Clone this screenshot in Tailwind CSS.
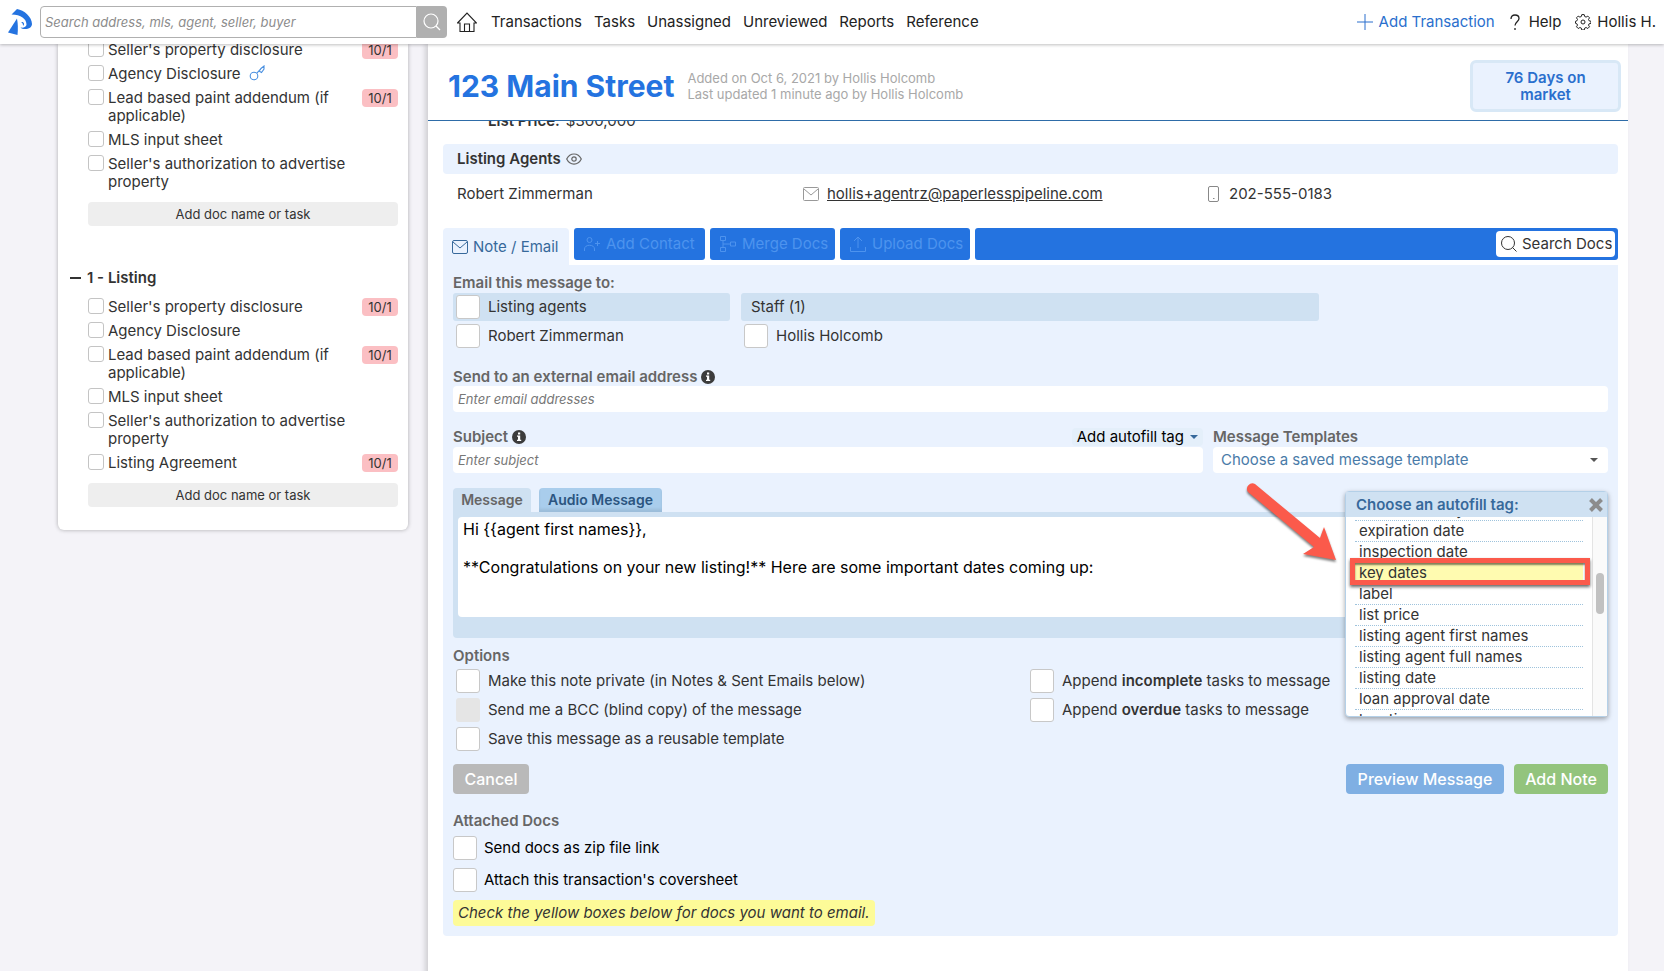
<!DOCTYPE html>
<html lang="en">
<head>
    <meta charset="utf-8">
    <meta name="viewport" content="width=device-width, initial-scale=1">
    <title>123 Main Street</title>
    <script src="https://cdn.jsdelivr.net/npm/@tailwindcss/browser@4"></script>
</head>
<body class="bg-[#f4f3f8] font-['Inter',sans-serif] text-sm text-[#333] h-screen overflow-hidden">

    <!-- Top bar -->
    <header class="relative z-20 flex h-11 items-center bg-white pl-2 pr-2 text-[15px] text-[#222] shadow-[0_1px_3px_rgba(0,0,0,0.25)]">
        <a href="#" aria-label="Home page" class="mr-2 shrink-0">
            <svg class="h-7 w-6" viewBox="0 0 24 28" fill="#2473e0"><path d="M3.500 6.500 9 1C16 2 24 9 24 16c0 3-3 5-7 5-2 0-3.500-.5-4.500-1.500 3 .5 6-.5 6-3C18.500 11 13 6.500 3.500 6.500Z"/><path d="M9 10.500 0 24.500l9.500 2.500c.6-6 .5-11-.5-16.500Z"/><path d="M13 14c3-.5 4 2 2 4 .3-1.500-.5-3-2-4Z"/></svg>
        </a>
        <form class="flex h-8 w-[407px] shrink-0">
            <input type="text" aria-label="Search" placeholder="Search address, mls, agent, seller, buyer" class="min-w-0 flex-1 rounded-l-sm border border-[#b0b0b0] bg-white px-1 text-[13px] italic placeholder:text-[#8c8c8c]">
            <button type="button" aria-label="Search" class="flex w-[30px] items-center justify-center rounded-r-sm bg-[#b0b0b0]">
                <svg class="h-[18px] w-[18px]" viewBox="0 0 18 18" fill="none" stroke="#fff" stroke-width="1.2"><circle cx="8" cy="8" r="7"/><path d="m13 13 4 4"/></svg>
            </button>
        </form>
        <nav class="ml-[10px] flex items-center gap-3">
            <a href="#" aria-label="Home" class="mr-[2px]">
                <svg class="h-5 w-5" viewBox="0 0 20 20" fill="none" stroke="#222" stroke-width="1.1"><path d="M.5 11 10 1l9.500 10H17v8.500H3V11Z"/><path d="M7.500 19.500V12h5v7.500"/></svg>
            </a>
            <a href="#">Transactions</a>
            <a href="#">Tasks</a>
            <a href="#">Unassigned</a>
            <a href="#">Unreviewed</a>
            <a href="#">Reports</a>
            <a href="#">Reference</a>
        </nav>
        <div class="ml-auto flex items-center gap-[14px]">
            <a href="#" class="flex items-center gap-[6px] text-[#2a6fcd]">
                <svg class="h-4 w-4" viewBox="0 0 16 16" stroke="#2a6fcd" fill="none"><path d="M8 0v16M0 8h16"/></svg>
                Add Transaction
            </a>
            <a href="#" class="flex items-center gap-2">
                <svg class="h-4 w-3" viewBox="0 0 12 16" fill="none" stroke="#222" stroke-width="1.300"><path d="M2 5C2 2.500 3.500 1 6 1s4 1.500 4 3.500C10 7.500 6 8 6 11.500"/><path d="M6 14v2"/></svg>
                Help
            </a>
            <a href="#" class="flex items-center gap-[6px]">
                <svg class="h-4 w-4" viewBox="0 0 16 16" fill="none" stroke="#222" stroke-linejoin="round"><path d="M6.800.600h2.400l.5 1.900 1.400.600 1.700-1 1.700 1.700-1 1.700.600 1.300 1.900.500v2l-1.900.500-.6 1.300 1 1.700-1.700 1.700-1.700-1-1.400.600-.5 1.900H6.800l-.5-1.900-1.400-.6-1.700 1-1.700-1.700 1-1.700-.600-1.300L.500 9.300v-2l1.400-.5.6-1.300-1-1.700 1.700-1.700 1.700 1 1.400-.6Z"/><circle cx="8" cy="8" r="2"/></svg>
                Hollis H.
            </a>
        </div>
    </header>

    <div class="flex h-full items-start">

        <!-- Checklist -->
        <aside class="ml-[58px] w-[350px] shrink-0 overflow-hidden rounded-b-md bg-white pb-[23px] pl-3 pr-[10px] text-[15px] leading-[18px] shadow-[0_0_4px_rgba(0,0,0,0.3)]">
            <ul class="-mt-[3px] flex flex-col gap-[6px] pl-[18px]">
                <li class="flex items-start gap-1">
                    <input type="checkbox" id="a1" class="h-4 w-4 shrink-0 appearance-none rounded-[3px] border border-[#c4c4c4] bg-white">
                    <label for="a1" class="flex-1">Seller's property disclosure</label>
                    <span class="w-9 rounded-sm bg-[#fbbfc3] text-center text-[13px]">10/1</span>
                </li>
                <li class="flex items-start gap-1">
                    <input type="checkbox" id="a2" class="h-4 w-4 shrink-0 appearance-none rounded-[3px] border border-[#c4c4c4] bg-white">
                    <label for="a2">Agency Disclosure</label>
                    <svg class="ml-1 h-4 w-4" viewBox="0 0 16 16" fill="none" stroke="#4a90e0" stroke-width="1.100"><circle cx="5" cy="11" r="3.800"/><path d="m7.800 8.200 4-4.200M10 6l2.500 1.500L15 4V1l-3 2.500Z"/></svg>
                </li>
                <li class="flex items-start gap-1">
                    <input type="checkbox" id="a3" class="h-4 w-4 shrink-0 appearance-none rounded-[3px] border border-[#c4c4c4] bg-white">
                    <label for="a3" class="flex-1 pr-5">Lead based paint addendum (if applicable)</label>
                    <span class="w-9 rounded-sm bg-[#fbbfc3] text-center text-[13px]">10/1</span>
                </li>
                <li class="flex items-start gap-1">
                    <input type="checkbox" id="a4" class="h-4 w-4 shrink-0 appearance-none rounded-[3px] border border-[#c4c4c4] bg-white">
                    <label for="a4">MLS input sheet</label>
                </li>
                <li class="flex items-start gap-1">
                    <input type="checkbox" id="a5" class="h-4 w-4 shrink-0 appearance-none rounded-[3px] border border-[#c4c4c4] bg-white">
                    <label for="a5" class="flex-1 pr-10">Seller's authorization to advertise property</label>
                </li>
            </ul>
            <div class="pl-[18px] pt-[11px]">
                <button type="button" class="h-6 w-full rounded-sm bg-[#eee] text-[13px]">Add doc name or task</button>
            </div>

            <h2 class="mt-[43px] flex items-center gap-[6px] text-[15px] font-semibold leading-[18px]"><span class="h-[2px] w-[11px] bg-[#333]"></span>1 - Listing</h2>
            <ul class="mt-[11px] flex flex-col gap-[6px] pl-[18px]">
                <li class="flex items-start gap-1">
                    <input type="checkbox" id="b1" class="h-4 w-4 shrink-0 appearance-none rounded-[3px] border border-[#c4c4c4] bg-white">
                    <label for="b1" class="flex-1">Seller's property disclosure</label>
                    <span class="w-9 rounded-sm bg-[#fbbfc3] text-center text-[13px]">10/1</span>
                </li>
                <li class="flex items-start gap-1">
                    <input type="checkbox" id="b2" class="h-4 w-4 shrink-0 appearance-none rounded-[3px] border border-[#c4c4c4] bg-white">
                    <label for="b2">Agency Disclosure</label>
                </li>
                <li class="flex items-start gap-1">
                    <input type="checkbox" id="b3" class="h-4 w-4 shrink-0 appearance-none rounded-[3px] border border-[#c4c4c4] bg-white">
                    <label for="b3" class="flex-1 pr-5">Lead based paint addendum (if applicable)</label>
                    <span class="w-9 rounded-sm bg-[#fbbfc3] text-center text-[13px]">10/1</span>
                </li>
                <li class="flex items-start gap-1">
                    <input type="checkbox" id="b4" class="h-4 w-4 shrink-0 appearance-none rounded-[3px] border border-[#c4c4c4] bg-white">
                    <label for="b4">MLS input sheet</label>
                </li>
                <li class="flex items-start gap-1">
                    <input type="checkbox" id="b5" class="h-4 w-4 shrink-0 appearance-none rounded-[3px] border border-[#c4c4c4] bg-white">
                    <label for="b5" class="flex-1 pr-10">Seller's authorization to advertise property</label>
                </li>
                <li class="flex items-start gap-1">
                    <input type="checkbox" id="b6" class="h-4 w-4 shrink-0 appearance-none rounded-[3px] border border-[#c4c4c4] bg-white">
                    <label for="b6" class="flex-1">Listing Agreement</label>
                    <span class="w-9 rounded-sm bg-[#fbbfc3] text-center text-[13px]">10/1</span>
                </li>
            </ul>
            <div class="pl-[18px] pt-[11px]">
                <button type="button" class="h-6 w-full rounded-sm bg-[#eee] text-[13px]">Add doc name or task</button>
            </div>
        </aside>

        <!-- Transaction -->
        <main class="ml-5 mr-9 min-h-full min-w-0 flex-1 bg-white shadow-[-3px_0_5px_rgba(0,0,0,0.15)]">
            <div class="relative z-10 flex h-[77px] items-center border-b border-[#2e6ca8] bg-white pl-5 pr-[7px] pt-2">
                <h1 class="text-[30px] font-bold text-[#2473e0]">123 Main Street</h1>
                <p class="ml-[13px] text-[13px] leading-4 text-[#a8a8a8]">Added on Oct 6, 2021 by Hollis Holcomb<br>Last updated 1 minute ago by Hollis Holcomb</p>
                <div class="ml-auto w-[151px] rounded-md border-3 border-[#d8e8f6] bg-[#eaf2fe] px-5 py-[6px] text-center text-[15px] font-semibold leading-[17px] text-[#2a6fcd]">76 Days on market</div>
            </div>

            <div class="px-[15px] pr-[10px] text-[15px]">
                <dl class="-mt-[9px] flex h-[32px] gap-[6px] pl-[45px] leading-[18px]">
                    <dt class="font-semibold">List Price:</dt>
                    <dd>$300,000</dd>
                </dl>

                <h2 class="flex h-[30px] items-center gap-[5px] rounded-sm bg-[#eaf2fe] pl-[14px] font-semibold">
                    Listing Agents
                    <svg class="h-4 w-4" viewBox="0 0 16 16" fill="none" stroke="#666" stroke-width="1.200"><path d="M.700 8C4 1.300 12 1.300 15.300 8 12 14.700 4 14.700.700 8Z"/><circle cx="8" cy="8" r="2.200"/></svg>
                </h2>
                <div class="grid h-[54px] grid-cols-[346fr_405fr_410fr] items-start pl-[14px] pt-[9px]">
                    <span>Robert Zimmerman</span>
                    <span class="flex items-center gap-2">
                        <svg class="h-4 w-4" viewBox="0 0 16 16" fill="none" stroke="#999"><rect x=".5" y="1.500" width="15" height="13" rx="1"/><path d="m1 3 7 6 7-6"/></svg>
                        <a href="#" class="underline">hollis+agentrz@paperlesspipeline.com</a>
                    </span>
                    <span class="flex items-center gap-[10px]">
                        <svg class="h-4 w-[11px]" viewBox="0 0 11 16" fill="none" stroke="#888"><rect x=".5" y=".5" width="10" height="15" rx="1.500"/><path d="M5 12.500h1.500"/></svg>
                        202-555-0183
                    </span>
                </div>

                <!-- Action tabs -->
                <div class="flex items-start gap-[5px] text-[#4d93ee]">
                    <button type="button" class="flex h-[37px] w-[126px] items-center gap-[5px] rounded-t-sm bg-[#eaf2fe] pl-[9px] text-[#37699b]">
                        <svg class="h-4 w-4" viewBox="0 0 16 16" fill="none" stroke="#37699b"><rect x=".5" y="1.500" width="15" height="13" rx="1.500"/><path d="m1 3 7 6 7-6"/></svg>
                        Note / Email
                    </button>
                    <button type="button" class="flex h-8 w-[131px] items-center gap-[6px] rounded-[3px] bg-[#2473e0] pl-[10px]">
                        <svg class="h-4 w-4" viewBox="0 0 16 16" fill="none" stroke="#4d93ee"><circle cx="5.500" cy="4" r="2.500"/><path d="M.500 15v-2c0-5 10-5 10 0v2M13.500 5v5M11 7.500h5"/></svg>
                        Add Contact
                    </button>
                    <button type="button" class="flex h-8 w-[125px] items-center gap-[6px] rounded-[3px] bg-[#2473e0] pl-[10px]">
                        <svg class="h-4 w-4" viewBox="0 0 16 16" fill="none" stroke="#4d93ee"><path d="M.500.500h5v4h-5ZM.500 11.500h5v4h-5ZM10.500 6h5v4h-5ZM3 4.500v7M3 8h7.500"/></svg>
                        Merge Docs
                    </button>
                    <button type="button" class="flex h-8 w-[130px] items-center gap-[6px] rounded-[3px] bg-[#2473e0] pl-[10px]">
                        <svg class="h-4 w-4" viewBox="0 0 16 16" fill="none" stroke="#4d93ee"><path d="M8 12V1M4 5l4-4 4 4M.500 11v4.500h15V11"/></svg>
                        Upload Docs
                    </button>
                    <div class="flex h-8 flex-1 items-center justify-end rounded-[3px] bg-[#2473e0] pr-[3px]">
                        <button type="button" class="flex h-[26px] w-[119px] items-center gap-[5px] rounded-sm bg-white pl-[5px] text-[#333]">
                            <svg class="h-4 w-4 shrink-0" viewBox="0 0 16 16" fill="none" stroke="#333"><circle cx="7" cy="7" r="6.500"/><path d="m11.500 11.500 4 4"/></svg>
                            <span class="whitespace-nowrap">Search Docs</span>
                        </button>
                    </div>
                </div>

                <!-- Note / email form -->
                <form class="relative rounded-b-sm bg-[#eaf2fe] px-[10px] pb-[10px] pt-[9px]">
                    <h3 class="h-[19px] font-semibold leading-[18px] text-[#666]">Email this message to:</h3>
                    <div class="flex gap-[11px]">
                        <div class="w-[277px]">
                            <div class="flex h-7 items-center gap-2 rounded-[3px] bg-[#cfe1f2] pl-[3px]">
                                <input type="checkbox" id="to-agents" class="h-6 w-6 appearance-none rounded-[3px] border border-[#c8c8c8] bg-white">
                                <label for="to-agents">Listing agents</label>
                            </div>
                            <div class="mt-[3px] flex h-6 items-center gap-2 pl-[3px]">
                                <input type="checkbox" id="to-robert" class="h-6 w-6 appearance-none rounded-[3px] border border-[#c8c8c8] bg-white">
                                <label for="to-robert">Robert Zimmerman</label>
                            </div>
                        </div>
                        <div class="w-[578px]">
                            <div class="flex h-7 items-center rounded-[3px] bg-[#cfe1f2] pl-[10px]">Staff (1)</div>
                            <div class="mt-[3px] flex h-6 items-center gap-2 pl-[3px]">
                                <input type="checkbox" id="to-hollis" class="h-6 w-6 appearance-none rounded-[3px] border border-[#c8c8c8] bg-white">
                                <label for="to-hollis">Hollis Holcomb</label>
                            </div>
                        </div>
                    </div>

                    <label for="external" class="mt-[19px] flex h-[19px] items-center gap-[4px] font-semibold text-[#666]">
                        Send to an external email address
                        <svg class="h-[14px] w-[14px]" viewBox="0 0 14 14"><circle cx="7" cy="7" r="7" fill="#3c3c3c"/><path d="M6 2.500h2.200v2H6ZM5 5.500h3.200v4.300H9.200V11H5V9.800h1V6.800H5Z" fill="#fff"/></svg>
                    </label>
                    <input type="text" id="external" placeholder="Enter email addresses" class="block h-[26px] w-full rounded-sm bg-white px-[5px] text-[13px] italic placeholder:text-[#777]">

                    <div class="mt-[15px] flex gap-[10px]">
                        <div class="flex-[750]">
                            <div class="flex h-5 items-center justify-between">
                                <label for="subject" class="flex items-center gap-[4px] font-semibold text-[#666]">
                                    Subject
                                    <svg class="h-[14px] w-[14px]" viewBox="0 0 14 14"><circle cx="7" cy="7" r="7" fill="#3c3c3c"/><path d="M6 2.500h2.200v2H6ZM5 5.500h3.200v4.300H9.200V11H5V9.800h1V6.800H5Z" fill="#fff"/></svg>
                                </label>
                                <button type="button" class="flex h-[18px] items-center gap-[6px] rounded-sm bg-[#e4effa] px-[5px] text-black">
                                    Add autofill tag
                                    <svg class="h-1 w-2" viewBox="0 0 8 4" fill="#37699b"><path d="M0 0h8L4 4Z"/></svg>
                                </button>
                            </div>
                            <input type="text" id="subject" placeholder="Enter subject" class="block h-[26px] w-full rounded-sm bg-white px-[5px] text-[13px] italic placeholder:text-[#777]">
                        </div>
                        <div class="flex-[395]">
                            <label for="template" class="block h-5 font-semibold leading-5 text-[#666]">Message Templates</label>
                            <div class="relative">
                                <select id="template" class="block h-[26px] w-full appearance-none rounded-sm bg-white pl-2 text-[#4a7ba8]">
                                    <option>Choose a saved message template</option>
                                </select>
                                <svg class="absolute right-[10px] top-[11px] h-1 w-2" viewBox="0 0 8 4" fill="#555"><path d="M0 0h8L4 4Z"/></svg>
                            </div>
                        </div>
                    </div>

                    <!-- Message -->
                    <div class="mt-[15px] flex gap-2 font-semibold">
                        <button type="button" class="h-6 w-[78px] rounded-t-sm bg-[#cfe1f2] text-[14px] text-[#666]">Message</button>
                        <button type="button" class="h-6 w-[123px] rounded-t-sm bg-[#a9cdec] text-[14px] text-[#2b5580] shadow-[inset_0_-3px_3px_rgba(0,0,0,0.08)]">Audio Message</button>
                    </div>
                    <div class="rounded-b-sm bg-[#cfe1f2] px-[5px] pb-[21px] pt-[5px]">
                        <textarea aria-label="Message" class="block h-[100px] w-full resize-none rounded-sm bg-white px-[5px] py-[3px] text-base leading-[19px] text-black">Hi {{agent first names}},

**Congratulations on your new listing!** Here are some important dates coming up:</textarea>
                    </div>

                    <h3 class="mt-[9px] h-[22px] font-semibold leading-[18px] text-[#666]">Options</h3>
                    <div class="grid grid-cols-[574fr_581fr] gap-y-[5px]">
                        <div class="flex items-center gap-2 pl-[3px]">
                            <input type="checkbox" id="private" class="h-6 w-6 appearance-none rounded-[3px] border border-[#c8c8c8] bg-white">
                            <label for="private">Make this note private (in Notes &amp; Sent Emails below)</label>
                        </div>
                        <div class="flex items-center gap-2 pl-[3px]">
                            <input type="checkbox" id="incomplete" class="h-6 w-6 appearance-none rounded-[3px] border border-[#c8c8c8] bg-white">
                            <label for="incomplete">Append <b class="font-semibold">incomplete</b> tasks to message</label>
                        </div>
                        <div class="flex items-center gap-2 pl-[3px]">
                            <input type="checkbox" id="bcc" disabled class="h-6 w-6 appearance-none rounded-[3px] bg-[#e5e5e5]">
                            <label for="bcc">Send me a BCC (blind copy) of the message</label>
                        </div>
                        <div class="flex items-center gap-2 pl-[3px]">
                            <input type="checkbox" id="overdue" class="h-6 w-6 appearance-none rounded-[3px] border border-[#c8c8c8] bg-white">
                            <label for="overdue">Append <b class="font-semibold">overdue</b> tasks to message</label>
                        </div>
                        <div class="flex items-center gap-2 pl-[3px]">
                            <input type="checkbox" id="reusable" class="h-6 w-6 appearance-none rounded-[3px] border border-[#c8c8c8] bg-white">
                            <label for="reusable">Save this message as a reusable template</label>
                        </div>
                    </div>

                    <div class="mt-[13px] flex gap-[10px] text-base font-medium text-white">
                        <button type="button" class="mr-auto h-[30px] w-[76px] rounded-sm bg-[#b9b9b9]">Cancel</button>
                        <button type="button" class="h-[30px] w-[158px] rounded-sm bg-[#7fafe3]">Preview Message</button>
                        <button type="button" class="h-[30px] w-[94px] rounded-sm bg-[#93c47d]">Add Note</button>
                    </div>

                    <h3 class="mt-[18px] h-6 font-semibold leading-[18px] text-[#666]">Attached Docs</h3>
                    <div class="flex flex-col gap-2 text-black">
                        <div class="flex items-center gap-[7px]">
                            <input type="checkbox" id="zip" class="h-6 w-6 appearance-none rounded-[3px] border border-[#c8c8c8] bg-white">
                            <label for="zip">Send docs as zip file link</label>
                        </div>
                        <div class="flex items-center gap-[7px]">
                            <input type="checkbox" id="cover" class="h-6 w-6 appearance-none rounded-[3px] border border-[#c8c8c8] bg-white">
                            <label for="cover">Attach this transaction's coversheet</label>
                        </div>
                    </div>
                    <p class="mt-2 flex h-[26px] w-fit items-center rounded-sm bg-[#fdfb98] px-[5px] italic">Check the yellow boxes below for docs you want to email.</p>

                    <!-- Autofill tag menu -->
                    <div class="absolute right-[10px] top-[226px] w-[263px] rounded-sm border border-[#b4d0e8] bg-white shadow-[0_2px_5px_rgba(0,0,0,0.35)]">
                        <div class="flex h-[25px] items-center justify-between bg-[#cfe1f2] pl-[10px] pr-1 font-semibold text-[#37699b]">
                            Choose an autofill tag:
                            <button type="button" aria-label="Close">
                                <svg class="h-[14px] w-[14px]" viewBox="0 0 14 14" stroke="#8c8c8c" stroke-width="4"><path d="m1.500 1.500 11 11M12.500 1.500l-11 11"/></svg>
                            </button>
                        </div>
                        <div class="flex h-[199px] overflow-hidden">
                            <ul class="-mt-[17px] ml-[9px] mr-[9px] flex-1 leading-[20px]">
                                <li class="border-b border-dotted border-[#9fc3dc] pl-1">earnest money</li>
                                <li class="border-b border-dotted border-[#9fc3dc] pl-1">expiration date</li>
                                <li class="border-b border-dotted border-[#9fc3dc] pl-1">inspection date</li>
                                <li class="border-b border-dotted border-[#9fc3dc] bg-[#fffbb0] pl-1">key dates</li>
                                <li class="border-b border-dotted border-[#9fc3dc] pl-1">label</li>
                                <li class="border-b border-dotted border-[#9fc3dc] pl-1">list price</li>
                                <li class="border-b border-dotted border-[#9fc3dc] pl-1">listing agent first names</li>
                                <li class="border-b border-dotted border-[#9fc3dc] pl-1">listing agent full names</li>
                                <li class="border-b border-dotted border-[#9fc3dc] pl-1">listing date</li>
                                <li class="border-b border-dotted border-[#9fc3dc] pl-1">loan approval date</li>
                                <li class="pl-1">location</li>
                            </ul>
                            <div class="w-[15px] border-l border-[#e4e4e4] bg-[#fafafa] pl-[3px] pt-[56px]">
                                <div class="h-[41px] w-2 rounded-full bg-[#c1c1c1]"></div>
                            </div>
                        </div>
                        <!-- Callout -->
                        <div class="absolute left-1 top-[66px] h-[27px] w-[240px] border-5 border-[#fb5a4b] shadow-[0_2px_3px_rgba(0,0,0,0.6),inset_0_2px_2px_rgba(0,0,0,0.5)]"></div>
                        <svg class="absolute -left-[105px] -top-[11px] h-[88px] w-[100px] drop-shadow-[0_2px_1px_rgba(0,0,0,0.5)]" viewBox="0 0 100 88" fill="#fb5a4b"><path d="M14 3 79 57l4-11 12 33-33-6 11-7L7 11A5.500 5.500 0 0 1 14 3Z"/></svg>
                    </div>
                </form>
            </div>
        </main>
    </div>
</body>
</html>
